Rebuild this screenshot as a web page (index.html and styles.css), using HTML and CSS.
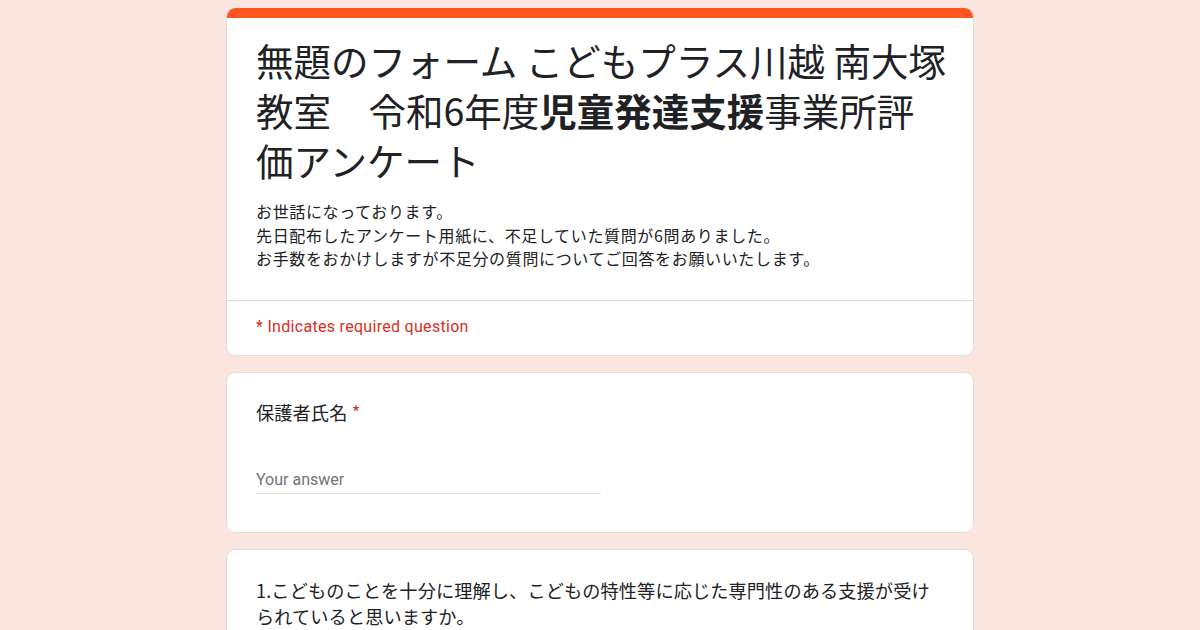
FILE: index.html
```html
<!DOCTYPE html>
<html lang="ja">
<head>
<meta charset="utf-8">
<title>無題のフォーム</title>
<link rel="stylesheet" href="styles.css">
</head>
<body>
<main class="form">
  <section class="card header-card">
    <div class="accent"></div>
    <div class="header-body">
      <h1 class="title">無題のフォーム こどもプラス川越 南大塚<br>教室　令和6年度<b>児童発達支援</b>事業所評<br>価アンケート</h1>
      <p class="desc">お世話になっております。<br>先日配布したアンケート用紙に、不足していた質問が6問ありました。<br>お手数をおかけしますが不足分の質問についてご回答をお願いいたします。</p>
    </div>
    <div class="required-note">* Indicates required question</div>
  </section>

  <section class="card question question-short">
    <div class="q-title">保護者氏名 <span class="star">*</span></div>
    <div class="answer">Your answer</div>
  </section>

  <section class="card question">
    <div class="q-title">1.こどものことを十分に理解し、こどもの特性等に応じた専門性のある支援が受けられていると思いますか。</div>
  </section>
</main>
</body>
</html>
```

FILE: styles.css
```css
html, body {
  margin: 0;
  padding: 0;
}
body {
  background: #fbe5df;
  font-family: "Noto Sans CJK JP", Roboto, "Noto Sans", sans-serif;
  color: #202124;
  overflow: hidden;
}
.form {
  width: 748px;
  margin: 8px auto 0;
  display: flex;
  flex-direction: column;
  gap: 16px;
}
.card {
  background: #fff;
  border: 1px solid #dadce0;
  border-radius: 9px;
  overflow: hidden;
  box-sizing: border-box;
}
.header-card {
  border-top: none;
}
.accent {
  height: 10px;
  background: #ff5622;
}
.header-body {
  padding: 17px 29px 29px;
  border-bottom: 1px solid #dadce0;
}
.title {
  margin: 0;
  font-size: 37.5px;
  line-height: 50px;
  font-weight: 400;
  letter-spacing: 0;
  white-space: nowrap;
}
.title b {
  font-weight: 700;
}
.desc {
  margin: 15px 0 0;
  font-size: 16px;
  line-height: 23.5px;
  letter-spacing: 0.65px;
}
.required-note {
  padding: 16px 29px 18px;
  font-family: Roboto, "Noto Sans CJK JP", sans-serif;
  font-size: 16px;
  line-height: 20px;
  letter-spacing: 0.3px;
  color: #d93025;
}
.question {
  padding: 27px 29px 38px;
}
.question-short {
  padding-top: 26px;
}
.q-title {
  font-size: 18.2px;
  line-height: 26px;
  letter-spacing: 0.1px;
}
.star {
  color: #d93025;
}
.answer {
  margin-top: 43px;
  width: 345px;
  font-family: Roboto, "Noto Sans CJK JP", sans-serif;
  font-size: 16px;
  line-height: 24px;
  color: #70757a;
  padding-bottom: 1px;
  border-bottom: 1px solid #e0e0e0;
}
```
